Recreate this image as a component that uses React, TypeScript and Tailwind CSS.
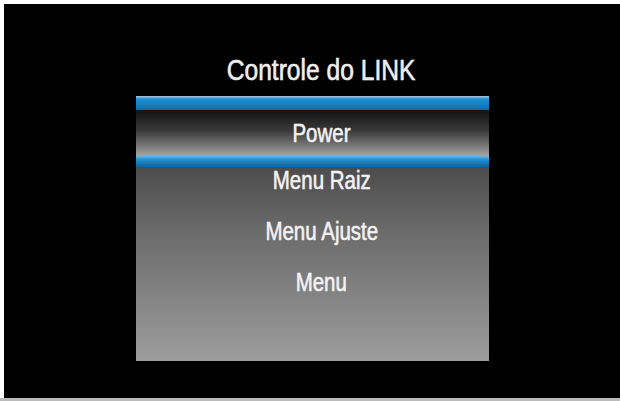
const font = "font-['Liberation_Sans','Arial',sans-serif]";

const items = ['Menu Raiz', 'Menu Ajuste', 'Menu'];

// the box shows a condensed grotesque; squeeze Liberation Sans to match
function Label({ text, className = '' }: { text: string; className?: string }) {
  return (
    <span className={`inline-block scale-x-[0.82] whitespace-nowrap [-webkit-text-stroke:0.35px_#f0f0f0] ${className}`}>
      {text}
    </span>
  );
}

export default function App() {
  return (
    <div className="flex h-[401px] w-[620px] flex-col bg-white">
      <div className="ml-1 mt-1 flex flex-1 flex-col bg-black">
        {/* title */}
        <div
          className={`${font} mt-[51px] pl-[18px] text-center text-[30px] leading-[30px] text-[#ededed] [text-shadow:0_0_1px_rgba(255,255,255,0.6)]`}
        >
          <Label text="Controle do LINK" />
        </div>

        {/* menu panel */}
        <div className="ml-[132px] mt-[11px] flex h-[265px] w-[353px] flex-col bg-gradient-to-b from-[#2c2c2c] via-[#6a6a6a] to-[#9d9d9d]">
          <div className="h-[14px] bg-gradient-to-b from-[#a9c6d8] via-[#1e94d6] via-20% to-[#0d6ba6]" />
          <div
            className={`${font} flex h-[46px] items-center justify-center bg-gradient-to-b from-[#121212] via-[#3a3a3a] via-45% to-[#a6a6a6] pl-[18px] pt-[1px] text-[25px] text-[#f2f2f2] [text-shadow:0_0_1px_rgba(255,255,255,0.5)]`}
          >
            <Label text="Power" />
          </div>
          <div className="h-[11px] bg-gradient-to-b from-[#6cb7de] via-[#1f93d3] via-30% to-[#0b64a0]" />

          <div className="flex flex-col gap-[23px]">
            {items.map((label) => (
              <div
                key={label}
                className={`${font} flex h-[28px] items-center justify-center pl-[18px] text-[25px] text-[#f2f2f2] [text-shadow:0_0_1px_rgba(255,255,255,0.5)]`}
              >
                <Label text={label} />
              </div>
            ))}
          </div>
        </div>
      </div>
      <div className="h-[3px] bg-[#bcbcbc]" />
    </div>
  );
}
